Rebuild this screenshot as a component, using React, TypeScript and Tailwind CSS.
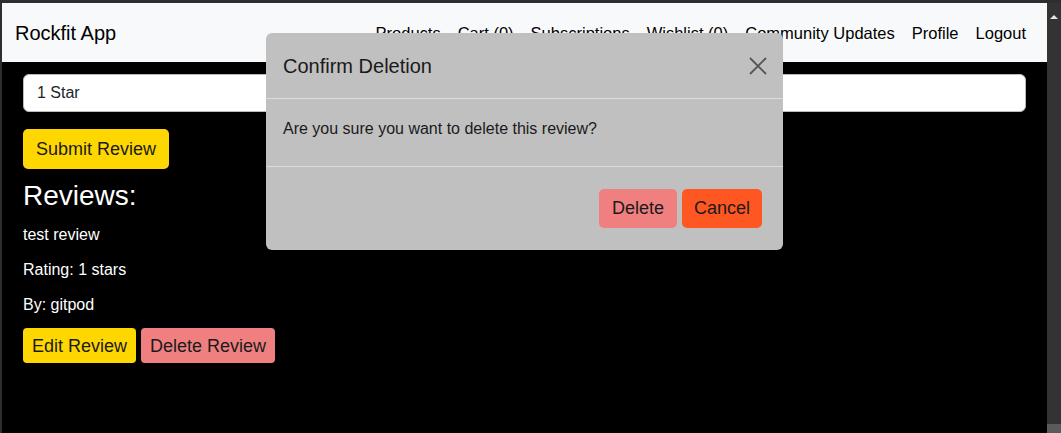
import React from "react";

const navLinks = ["Products", "Cart (0)", "Subscriptions", "Wishlist (0)", "Community Updates", "Profile", "Logout"];

const ConfirmModal = () => (
  <div className="absolute left-[264px] top-[30px] w-[517px] h-[217px] rounded-[6px] bg-[#c0c0c0] flex flex-col text-[#1a1a1a]">
    <div className="h-[66px] shrink-0 flex items-center justify-between pl-[17px] pr-[16px] border-b border-[#dcdcdc]">
      <span className="text-[20px]">Confirm Deletion</span>
      <svg width="18" height="18" viewBox="0 0 18 18" className="text-[#555]">
        <path d="M1 1 L17 17 M17 1 L1 17" stroke="currentColor" strokeWidth="1.8" />
      </svg>
    </div>
    <div className="h-[68px] shrink-0 flex items-center pl-[17px] pb-[8px] border-b border-[#dcdcdc] text-[16px]">
      Are you sure you want to delete this review?
    </div>
    <div className="flex-1 flex justify-end items-start gap-[5px] pt-[22px] pr-[21px]">
      <button className="h-[39px] px-[13px] rounded-[5px] bg-[#f08080] text-[18px]">Delete</button>
      <button className="h-[39px] px-[12px] rounded-[5px] bg-[#ff5722] text-[18px]">Cancel</button>
    </div>
  </div>
);

const App = () => {
  return (
    <div className="h-[433px] w-[1061px] bg-[#2e2e2e] flex pt-[3px] pl-[2px] overflow-hidden font-['Liberation_Sans',Arial,sans-serif]">
      <div className="flex-1 relative bg-black">
        <nav className="h-[59px] bg-[#f8f9fa] flex items-center pl-[13px] pr-[21px] text-black">
          <span className="text-[20px]">Rockfit App</span>
          <div className="ml-auto flex gap-[17px] text-[16.5px] pt-[1px]">
            {navLinks.map((l) => (
              <span key={l}>{l}</span>
            ))}
          </div>
        </nav>
        <div className="px-[21px] pt-[12px] flex flex-col items-start">
          <div className="w-full h-[38px] bg-white border border-[#bbb] rounded-[6px] flex items-center pl-[13px] text-[16px] text-[#212529]">
            1 Star
          </div>
          <button className="mt-[17px] h-[40px] px-[13px] rounded-[5px] bg-[#ffd700] text-[18px] text-[#1a1a1a] pt-[1px]">
            Submit Review
          </button>
          <h2 className="mt-[10px] text-[28px] leading-[33px] text-white">Reviews:</h2>
          <p className="mt-[13px] text-[16px] leading-[19px] text-white">test review</p>
          <p className="mt-[16px] text-[16px] leading-[19px] text-white">Rating: 1 stars</p>
          <p className="mt-[16px] text-[16px] leading-[19px] text-white">By: gitpod</p>
          <div className="mt-[14px] flex gap-[5px]">
            <button className="h-[35px] px-[9px] rounded-[4px] bg-[#ffd700] text-[18px] text-[#1a1a1a] pt-[1px]">Edit Review</button>
            <button className="h-[35px] px-[9px] rounded-[4px] bg-[#f08080] text-[18px] text-[#1a1a1a] pt-[1px]">Delete Review</button>
          </div>
        </div>
        <ConfirmModal />
      </div>
      <div className="w-[14px] bg-[#333] flex flex-col items-center pt-[12px]">
        <div className="w-0 h-0 border-l-[4px] border-r-[4px] border-b-[4px] border-l-transparent border-r-transparent border-b-[#e6e6e6]" />
        <div className="mt-auto w-full h-[9px] bg-[#5a5a5a]" />
      </div>
    </div>
  );
};

export default App;
